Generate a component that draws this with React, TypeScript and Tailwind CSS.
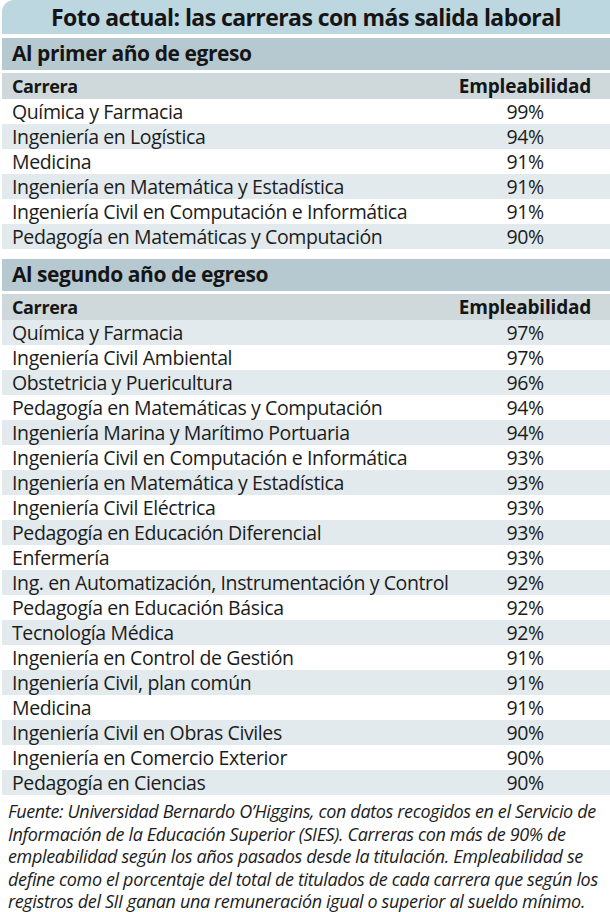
import React from "react";

const first: [string, string][] = [
  ["Química y Farmacia", "99%"],
  ["Ingeniería en Logística", "94%"],
  ["Medicina", "91%"],
  ["Ingeniería en Matemática y Estadística", "91%"],
  ["Ingeniería Civil en Computación e Informática", "91%"],
  ["Pedagogía en Matemáticas y Computación", "90%"],
];

const second: [string, string][] = [
  ["Química y Farmacia", "97%"],
  ["Ingeniería Civil Ambiental", "97%"],
  ["Obstetricia y Puericultura", "96%"],
  ["Pedagogía en Matemáticas y Computación", "94%"],
  ["Ingeniería Marina y Marítimo Portuaria", "94%"],
  ["Ingeniería Civil en Computación e Informática", "93%"],
  ["Ingeniería en Matemática y Estadística", "93%"],
  ["Ingeniería Civil Eléctrica", "93%"],
  ["Pedagogía en Educación Diferencial", "93%"],
  ["Enfermería", "93%"],
  ["Ing. en Automatización, Instrumentación y Control", "92%"],
  ["Pedagogía en Educación Básica", "92%"],
  ["Tecnología Médica", "92%"],
  ["Ingeniería en Control de Gestión", "91%"],
  ["Ingeniería Civil, plan común", "91%"],
  ["Medicina", "91%"],
  ["Ingeniería Civil en Obras Civiles", "90%"],
  ["Ingeniería en Comercio Exterior", "90%"],
  ["Pedagogía en Ciencias", "90%"],
];

function Section({
  title,
  rows,
  shadeOdd,
}: {
  title: string;
  rows: [string, string][];
  shadeOdd: boolean;
}) {
  return (
    <div className="flex flex-col">
      <div className="h-[32px] bg-[#b7c9d0] flex items-center pl-[10px] text-[21px] font-bold tracking-[-0.02em] text-[#151515]">
        {title}
      </div>
      <div className="mt-[3px] h-[26px] bg-[#cfd9dc] flex items-center pr-[5px] text-[18px] font-bold tracking-[-0.02em] text-[#151515]">
        <div className="flex-1 min-w-0 pl-[10px]">Carrera</div>
        <div className="w-[160px] shrink-0 text-center text-[19px] tracking-[-0.01em]">Empleabilidad</div>
      </div>
      {rows.map(([name, pct], i) => {
        const shaded = shadeOdd ? i % 2 === 1 : i % 2 === 0;
        return (
          <div
            key={i}
            className={
              "h-[25px] flex items-center pr-[5px] text-[19.5px] tracking-[-0.02em] text-[#1c1c1c] " +
              (shaded ? "bg-[#e2eaed]" : "bg-white")
            }
          >
            <div className="flex-1 min-w-0 pl-[10px] whitespace-nowrap">{name}</div>
            <div className="w-[160px] shrink-0 text-center">{pct}</div>
          </div>
        );
      })}
    </div>
  );
}

export default function App() {
  return (
    <div
      className="w-[610px] h-[912px] bg-white overflow-hidden pl-[2px] flex flex-col"
      style={{ fontFamily: '"Open Sans", "Noto Sans", sans-serif' }}
    >
      <div className="h-[34px] bg-[#bdd7e1] rounded-tl-[12px] flex items-center justify-center text-[23px] font-bold tracking-[-0.025em] text-[#151515]">
        Foto actual: las carreras con más salida laboral
      </div>
      <div className="mt-[4px]">
        <Section title="Al primer año de egreso" rows={first} shadeOdd={true} />
      </div>
      <div className="mt-[10px]">
        <Section title="Al segundo año de egreso" rows={second} shadeOdd={false} />
      </div>
      <div className="pt-[5px] pl-[6px] text-[18px] leading-[22.5px] italic tracking-[-0.02em] text-[#1c1c1c]">
        <div className="whitespace-nowrap">
          Fuente: Universidad Bernardo O’Higgins, con datos recogidos en el Servicio de
        </div>
        <div className="whitespace-nowrap">
          Información de la Educación Superior (SIES). Carreras con más de 90% de
        </div>
        <div className="whitespace-nowrap">
          empleabilidad según los años pasados desde la titulación. Empleabilidad se
        </div>
        <div className="whitespace-nowrap">
          define como el porcentaje del total de titulados de cada carrera que según los
        </div>
        <div className="whitespace-nowrap">
          registros del SII ganan una remuneración igual o superior al sueldo mínimo.
        </div>
      </div>
    </div>
  );
}
